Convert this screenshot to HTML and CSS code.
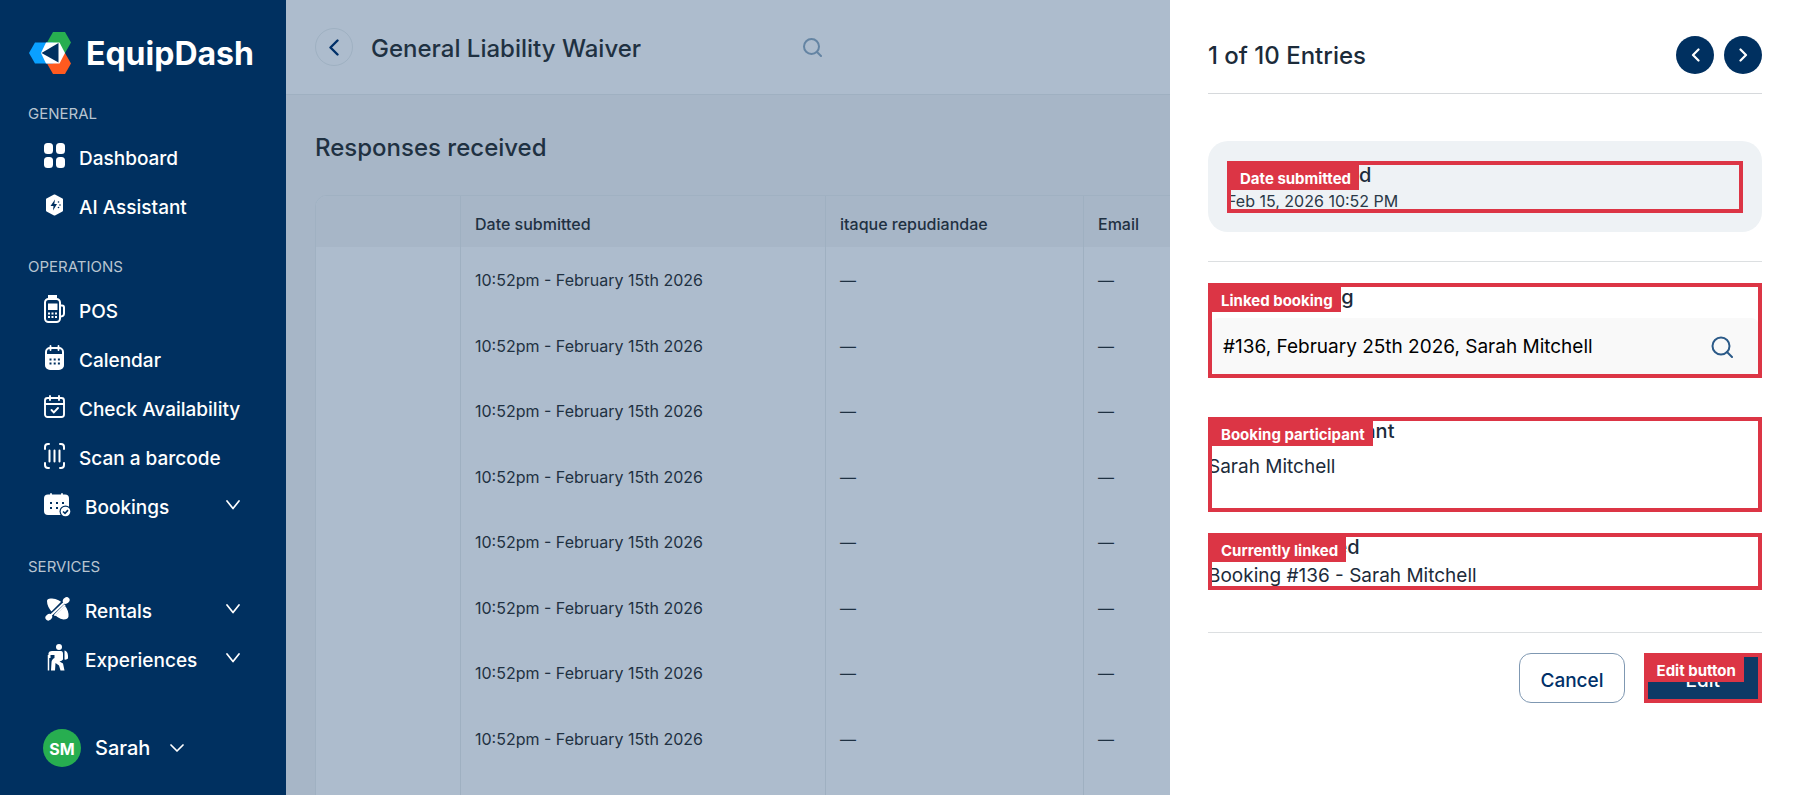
FILE: index.html
```html
<!DOCTYPE html>
<html lang="en">
<head>
<meta charset="utf-8">
<title>General Liability Waiver - EquipDash</title>
<link rel="stylesheet" href="styles.css">
</head>
<body>
<div class="app">
  <aside class="sidebar">
    <a class="brand" href="#">
      <svg class="brand-mark" viewBox="0 0 42 42" aria-hidden="true">
        <path fill="#27ae50" d="M24 0h12l6 10.500-6 10.500H24l-6-10.500z"/>
        <path fill="#ff5a1f" d="M24 21h12l6 10.500-6 10.500H24l-6-10.500z"/>
        <path fill="#0aa0ff" d="M6 10.500h18l6 10.500-6 10.500H6L0 21z"/>
        <path fill="#fff" d="M17 10.500h13.500L36 21l-5.500 10.500H17L12 21z"/>
        <path fill="#003060" d="M12.500 21 29.500 11v19.500z"/>
      </svg>
      <span>EquipDash</span>
    </a>
    <nav>
      <h2 class="nav-label">GENERAL</h2>
      <a class="nav-item" href="#">
        <svg width="21" height="25" viewBox="0 0 21 25" fill="#fff"><rect x="0" y="0" width="9" height="11" rx="3.500"/><rect x="12" y="0" width="9" height="11" rx="3.500"/><rect x="0" y="14" width="9" height="11" rx="3.500"/><rect x="12" y="14" width="9" height="11" rx="3.500"/></svg>
        Dashboard</a>
      <a class="nav-item" href="#">
        <svg width="21" height="22" viewBox="0 0 21 22"><path fill="#fff" stroke="#fff" stroke-width="2" stroke-linejoin="round" d="M10.500 1.500 18 5.500v11l-7.500 4-7.500-4v-11z"/><path fill="#003060" d="M11 5.500 6.500 12h3L9 16.500l4-6.500h-2.700z"/><circle cx="14.500" cy="8" r=".8" fill="#003060"/><circle cx="16" cy="11" r=".8" fill="#003060"/><circle cx="14.500" cy="13.500" r=".8" fill="#003060"/></svg>
        AI Assistant</a>

      <h2 class="nav-label">OPERATIONS</h2>
      <a class="nav-item" href="#">
        <svg width="21" height="28" viewBox="0 0 21 28" fill="none"><path fill="#fff" d="M4 0h9v5H4z"/><rect x="1" y="4" width="15" height="23" rx="3.500" stroke="#fff" stroke-width="2"/><path stroke="#fff" stroke-width="2" d="M16 10.500h2q2 0 2 2v6q0 3-4 3"/><path fill="#fff" d="M4 8.500h9.500V15H4z"/><path stroke="#fff" stroke-width="1.800" stroke-dasharray="2 1.500" d="M4 18.500h9.500M4 22h9.500"/></svg>
        POS</a>
      <a class="nav-item" href="#">
        <svg width="21" height="25" viewBox="0 0 21 25" fill="none"><rect x="2" y="3" width="17" height="21" rx="4" stroke="#fff" stroke-width="2"/><path fill="#fff" d="M1.500 9h18v11q0 4-4 4h-10q-4 0-4-4z"/><path stroke="#fff" stroke-width="1.800" stroke-linecap="round" d="M6.500 1v4M14.500 1v4"/><path stroke="#003060" stroke-width="2" stroke-dasharray="2 2.200" d="M5.500 14.500h11M5.500 18.500h11"/></svg>
        Calendar</a>
      <a class="nav-item" href="#">
        <svg width="21" height="23" viewBox="0 0 21 23" fill="none" stroke="#fff" stroke-width="1.900" stroke-linecap="round"><rect x="1" y="3" width="19" height="19" rx="2.500"/><path d="M1 9h19M6 1v4M15 1v4M7.500 15l2.300 2.300L14 13"/></svg>
        Check Availability</a>
      <a class="nav-item" href="#">
        <svg width="21" height="26" viewBox="0 0 21 26" fill="none" stroke="#fff" stroke-width="2" stroke-linecap="round"><path d="M1 6V4q0-3 3-3h1M16 1h1q3 0 3 3v2M1 20v2q0 3 3 3h1M16 25h1q3 0 3-3v-2M5.500 7.500v11M10.500 7.500v11M15.500 7.500v11"/></svg>
        Scan a barcode</a>
      <a class="nav-item" href="#">
        <svg width="27" height="24" viewBox="0 0 27 24"><rect x="0" y="1.500" width="25" height="20.500" rx="4" fill="#fff"/><path stroke="#fff" stroke-width="1.800" stroke-linecap="round" d="M7 1v2M18 1v2"/><path stroke="#003060" stroke-width="2" stroke-dasharray="2 4" d="M6 10h14M6 15h10"/><circle cx="21.500" cy="18.500" r="6" fill="#003060"/><circle cx="21.500" cy="18.500" r="4.800" fill="#fff"/><path fill="none" stroke="#003060" stroke-width="1.600" d="M19 18.500l2 1.800 3-3.200"/></svg>
        Bookings
        <svg class="caret" width="14" height="10" viewBox="0 0 14 10"><path d="M1 1l6 7.500L13 1"/></svg></a>

      <h2 class="nav-label">SERVICES</h2>
      <a class="nav-item" href="#">
        <svg width="27" height="24" viewBox="0 0 27 24"><path fill="#fff" d="M3 4q0-3 5-2.500 7 .5 12 6 5 6 4.500 12-.5 3-5 3-6-1-11-7Q3 10 3 4z"/><path stroke="#003060" stroke-width="6" d="M5 21 22 4"/><path stroke="#fff" stroke-width="1.800" stroke-linecap="round" d="M5 20 22 4M11 18 20.500 8.500"/><ellipse cx="22.200" cy="3.500" rx="3.600" ry="3" fill="#fff" transform="rotate(-40 22.200 3.500)"/><ellipse cx="4.800" cy="20.200" rx="3.600" ry="3" fill="#fff" transform="rotate(-40 4.800 20.200)"/></svg>
        Rentals
        <svg class="caret" width="14" height="10" viewBox="0 0 14 10"><path d="M1 1l6 7.500L13 1"/></svg></a>
      <a class="nav-item" href="#">
        <svg width="27" height="27" viewBox="0 0 27 27" fill="#fff"><circle cx="15" cy="3" r="3"/><path d="M8 7h9q2 0 2 3v5.500q-1 1.500-3.500 2l3.500 2 1.500 7h-4l-1.500-5-3.500-2.500-.5 7.500H7l.5-8q0-3 3-4.500V11H6.500v3H4.500V9q.5-2 3.500-2z"/><path d="M20.500 6.500q3 .5 3.500 5v3q-1.500 1.500-3.500 1V13z"/><path fill="none" stroke="#fff" stroke-width="1.500" d="M4.500 11v15.500"/></svg>
        Experiences
        <svg class="caret" width="14" height="10" viewBox="0 0 14 10"><path d="M1 1l6 7.500L13 1"/></svg></a>
    </nav>
    <button class="user" type="button">
      <span class="avatar">SM</span>
      <span>Sarah</span>
      <svg class="caret" width="14" height="10" viewBox="0 0 14 10"><path d="M1 2l6 6 6-6"/></svg>
    </button>
  </aside>

  <main class="main">
    <header class="topbar">
      <button class="back" type="button" aria-label="Back"><svg width="10" height="17" viewBox="0 0 10 17"><path d="M8.500 1.500l-7 7 7 7"/></svg></button>
      <h1 class="title">General Liability Waiver</h1>
      <button class="search" type="button" aria-label="Search"><svg width="19" height="19" viewBox="0 0 19 19"><circle cx="8.500" cy="8.500" r="7.500"/><path d="M14 14l4 4"/></svg></button>
    </header>
    <section class="content">
      <h2 class="title">Responses received</h2>
      <div class="table-wrap">
        <table>
          <colgroup><col class="col-select"><col class="col-date"><col class="col-answer"><col class="col-email"></colgroup>
          <thead><tr><th></th><th>Date submitted</th><th>itaque repudiandae</th><th>Email</th></tr></thead>
          <tbody>
            <tr><td></td><td>10:52pm - February 15th 2026</td><td>—</td><td>—</td></tr>
            <tr><td></td><td>10:52pm - February 15th 2026</td><td>—</td><td>—</td></tr>
            <tr><td></td><td>10:52pm - February 15th 2026</td><td>—</td><td>—</td></tr>
            <tr><td></td><td>10:52pm - February 15th 2026</td><td>—</td><td>—</td></tr>
            <tr><td></td><td>10:52pm - February 15th 2026</td><td>—</td><td>—</td></tr>
            <tr><td></td><td>10:52pm - February 15th 2026</td><td>—</td><td>—</td></tr>
            <tr><td></td><td>10:52pm - February 15th 2026</td><td>—</td><td>—</td></tr>
            <tr><td></td><td>10:52pm - February 15th 2026</td><td>—</td><td>—</td></tr>
            <tr><td></td><td></td><td></td><td></td></tr>
          </tbody>
        </table>
      </div>
    </section>
  </main>

  <aside class="drawer">
    <header class="drawer-head">
      <h2 class="title">1 of 10 Entries</h2>
      <button class="round" type="button" aria-label="Previous entry"><svg width="9" height="14" viewBox="0 0 9 14"><path d="M7.500 1.500L2 7l5.500 5.500"/></svg></button>
      <button class="round" type="button" aria-label="Next entry"><svg width="9" height="14" viewBox="0 0 9 14"><path d="M1.500 1.500L7 7l-5.500 5.500"/></svg></button>
    </header>

    <div class="card">
      <div class="marked">
        <h3 class="field-label">Date submitted</h3>
        <p class="stamp">Feb 15, 2026 10:52 PM</p>
        <span class="tag">Date submitted</span>
      </div>
    </div>

    <div class="fields">
      <div class="marked booking">
        <label class="field-label" for="booking">Linked booking</label>
        <div class="lookup">
          <input id="booking" type="text" value="#136, February 25th 2026, Sarah Mitchell">
          <svg width="22" height="22" viewBox="0 0 22 22"><circle cx="10" cy="10" r="8.500"/><path d="M16 16l5 5"/></svg>
        </div>
        <span class="tag">Linked booking</span>
      </div>
      <div class="marked participant">
        <h3 class="field-label">Booking participant</h3>
        <p class="value">Sarah Mitchell</p>
        <span class="tag">Booking participant</span>
      </div>
      <div class="marked linked">
        <h3 class="field-label">Currently linked</h3>
        <p class="value">Booking #136 - Sarah Mitchell</p>
        <span class="tag">Currently linked</span>
      </div>
    </div>

    <footer class="actions">
      <button class="btn" type="button">Cancel</button>
      <div class="marked">
        <button class="btn btn-primary" type="button">Edit</button>
        <span class="tag">Edit button</span>
      </div>
    </footer>
  </aside>
</div>
</body>
</html>
```

FILE: styles.css
```css
* { box-sizing: border-box; }
body, h1, h2, h3, p { margin: 0; }
body { font-family: Inter, "Liberation Sans", sans-serif; color: #1c2b3a; }
button { font: inherit; color: inherit; background: none; border: 0; padding: 0; }
a { color: inherit; text-decoration: none; }
svg { flex: none; display: block; }

.app { display: flex; height: 100vh; overflow: hidden; }
.title { font-size: 24px; font-weight: 500; line-height: 32px; }

/* Sidebar */
.sidebar { flex: none; width: 286px; display: flex; flex-direction: column; background: #003060; color: #fff; }
.brand { display: flex; align-items: center; gap: 15px; height: 79px; padding: 27px 0 0 29px; font-size: 32px; font-weight: 700; line-height: 40px; }
.brand span { padding-top: 2px; }
.brand-mark { width: 42px; height: 42px; }
.nav-label { margin: 25px 0 10px 28px; font-size: 15px; font-weight: 400; line-height: 20px; color: #b8c4d0; }
.nav-item { display: flex; align-items: center; gap: 14px; height: 49px; padding: 0 46px 0 44px; font-size: 19px; font-weight: 500; white-space: nowrap; }
.nav-item svg { margin-bottom: 6px; }
.caret { fill: none; stroke: #fff; stroke-width: 1.700; stroke-linecap: round; stroke-linejoin: round; }
.nav-item .caret { margin-left: auto; }
.user { display: flex; align-items: center; gap: 14px; margin: auto 0 28px 43px; font-size: 20px; font-weight: 500; }
.user .caret { margin-left: 6px; }
.avatar { width: 38px; height: 38px; border-radius: 50%; background: #27ae50; font-size: 16px; font-weight: 700; line-height: 40px; text-align: center; }

/* Dimmed page behind the drawer */
.main { flex: 1; min-width: 0; overflow: hidden; background: #a7b6c7; color: #1f3142; }
.topbar { display: flex; align-items: center; height: 95px; padding: 0 348px 0 29px; background: #adbccd; border-bottom: 1px solid #9fb0c1; }
.topbar .title { padding-top: 3px; }
.back { display: grid; place-items: center; width: 38px; height: 38px; margin-right: 18px; border: 1px solid #9fb1c2; border-radius: 50%; }
.back svg { fill: none; stroke: #003068; stroke-width: 2.400; stroke-linecap: round; stroke-linejoin: round; }
.search { margin-left: auto; }
.search svg { fill: none; stroke: #6484a3; stroke-width: 2; stroke-linecap: round; }
.content { padding: 37px 0 0 29px; }
.table-wrap { margin-top: 31px; width: 1000px; border: 1px solid #a0b1c2; border-radius: 12px; overflow: hidden; }
table { width: 100%; table-layout: fixed; border-collapse: separate; border-spacing: 0; background: #adbccd; font-size: 16px; }
.col-select { width: 145px; }
.col-date { width: 365px; }
.col-answer { width: 258px; }
th, td { padding: 0 14px; text-align: left; border-right: 1px solid #9fb0c1; white-space: nowrap; }
th { height: 51px; padding-top: 4px; font-weight: 500; background: #a7b6c7; }
td { height: 65px; padding-top: 1px; }
tr:nth-child(even) td { height: 66px; }

/* Drawer */
.drawer { flex: none; width: 35%; padding: 0 38px; background: #fff; }
.drawer-head { display: flex; align-items: center; gap: 10px; height: 94px; padding-top: 16px; border-bottom: 1px solid #d6d9dc; }
.drawer-head .title { flex: 1; padding-top: 2px; }
.round { display: grid; place-items: center; width: 38px; height: 38px; border-radius: 50%; background: #003060; }
.round svg { fill: none; stroke: #fff; stroke-width: 2.200; stroke-linecap: round; stroke-linejoin: round; }

.marked { position: relative; }
.marked::after { content: ""; position: absolute; inset: 0; border: 4px solid #dc3545; pointer-events: none; }
.tag { position: absolute; top: 4px; left: 3px; padding: 2px 8px 0 10px; background: #dc3545; color: #fff; font-size: 15px; font-weight: 700; line-height: 23px; white-space: nowrap; }

.field-label { display: block; font-size: 20px; font-weight: 500; line-height: 28px; }
.value { font-size: 19px; line-height: 28px; }
.stamp { font-size: 16px; line-height: 24px; color: #2b3947; }
.card { margin: 47px 0 29px; padding: 20px 19px 19px; border-radius: 20px; background: #eef2f5; }
.fields { padding: 21px 0 42px; border-top: 1px solid #dcdfe1; border-bottom: 1px solid #dcdfe1; }
.booking { padding-bottom: 3px; }
.lookup { display: flex; align-items: center; height: 57px; margin: 7px 3px 0; padding: 0 26px 0 12px; border-radius: 8px; background: #f9f9f9; }
.lookup input { flex: 1; min-width: 0; padding: 0; border: 0; background: none; color: #000; font: inherit; font-size: 19px; }
.lookup svg { fill: none; stroke: #2b5a88; stroke-width: 2; stroke-linecap: round; }
.participant { margin: 39px 0 21px; padding-bottom: 31px; }
.participant .value { margin-top: 8px; }
.linked .value { margin-top: 1px; }
.actions { display: flex; justify-content: flex-end; gap: 19px; margin-top: 20px; }
.btn { display: block; height: 50px; padding: 4px 20px 0; border: 1px solid #7f98b2; border-radius: 12px; color: #003068; font-size: 19px; font-weight: 500; }
.btn-primary { padding: 4px 42px 0; border: 0; border-radius: 0; background: #0e3a66; color: #fff; }
```
